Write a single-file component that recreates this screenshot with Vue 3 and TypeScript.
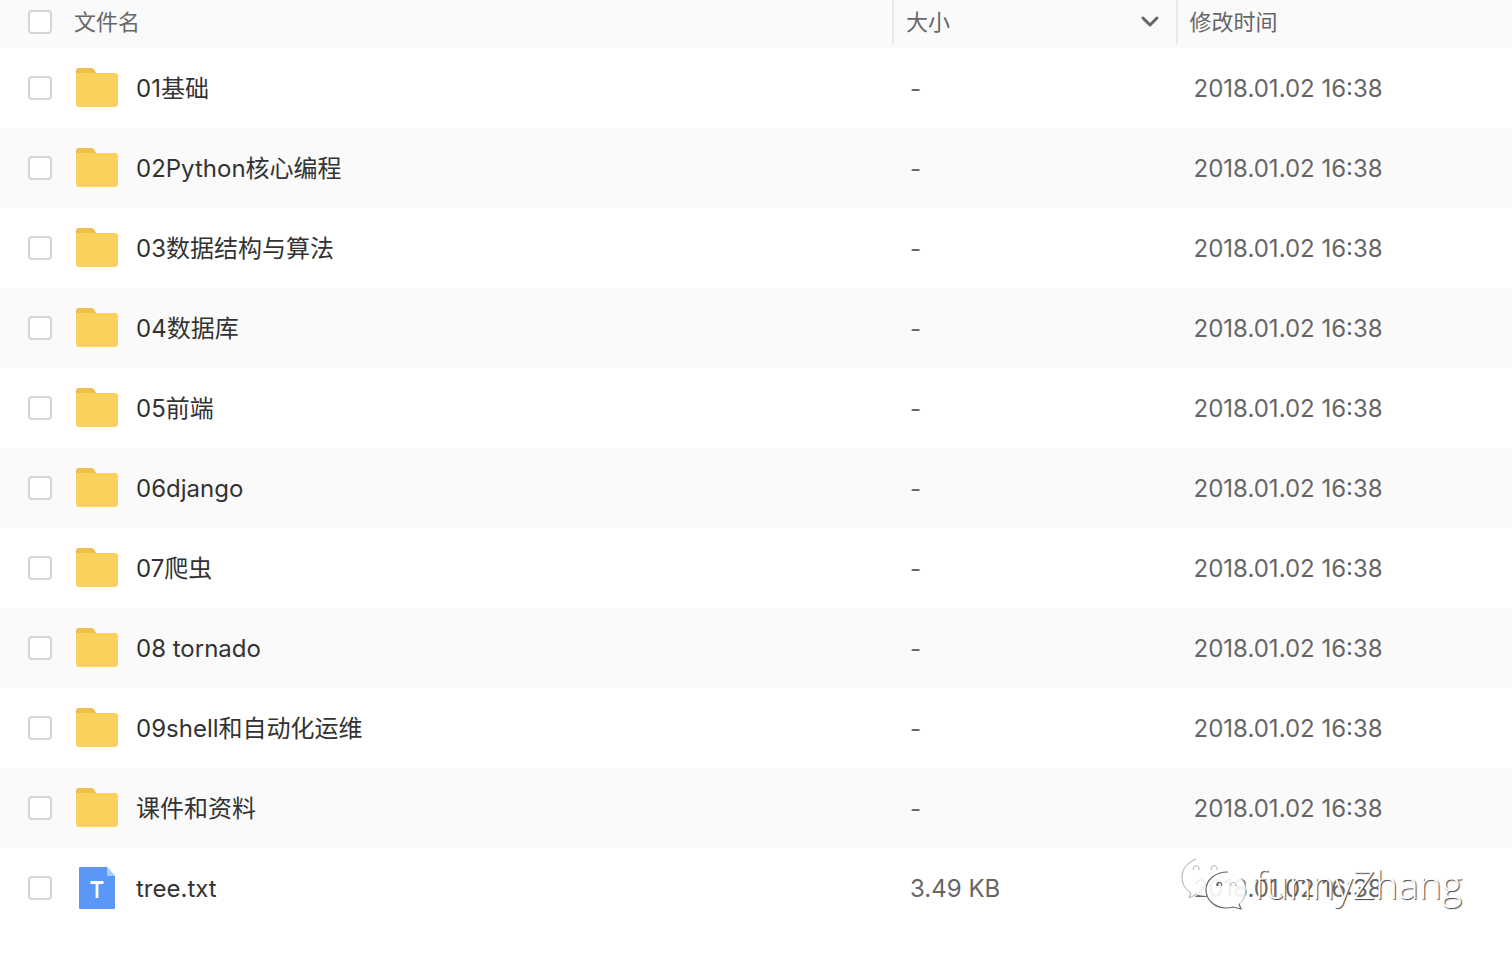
<script setup lang="ts">
import { ref } from 'vue'

interface FileEntry {
  name: string
  kind: 'folder' | 'text'
  size: string
  modified: string
}

const modified = '2018.01.02 16:38'

const folders = [
  '01基础',
  '02Python核心编程',
  '03数据结构与算法',
  '04数据库',
  '05前端',
  '06django',
  '07爬虫',
  '08 tornado',
  '09shell和自动化运维',
  '课件和资料',
]

const entries: FileEntry[] = [
  ...folders.map((name): FileEntry => ({ name, kind: 'folder', size: '-', modified })),
  { name: 'tree.txt', kind: 'text', size: '3.49 KB', modified },
]

const selected = ref<string[]>([])

function toggleAll(event: Event) {
  const checked = (event.target as HTMLInputElement).checked
  selected.value = checked ? entries.map((entry) => entry.name) : []
}
</script>

<template>
  <main class="browser">
    <table class="files">
      <colgroup>
        <col class="col-name" />
        <col class="col-size" />
        <col class="col-date" />
      </colgroup>
      <thead>
        <tr>
          <th scope="col">
            <div class="head name-cell">
              <input
                type="checkbox"
                class="check"
                aria-label="全选"
                :checked="selected.length === entries.length"
                @change="toggleAll"
              />
              <span>文件名</span>
            </div>
          </th>
          <th scope="col">
            <button type="button" class="head divided sort">
              <span>大小</span>
              <svg class="chevron" viewBox="0 0 20 14" aria-hidden="true">
                <path d="M3 3l7 7 7-7" />
              </svg>
            </button>
          </th>
          <th scope="col">
            <div class="head divided">修改时间</div>
          </th>
        </tr>
      </thead>
      <tbody>
        <tr v-for="(entry, index) in entries" :key="entry.name">
          <td>
            <div class="name-cell">
              <input :id="`file-${index}`" v-model="selected" type="checkbox" class="check" :value="entry.name" />
              <label class="file" :for="`file-${index}`">
                <svg v-if="entry.kind === 'folder'" class="icon" viewBox="0 0 42 42" aria-hidden="true">
                  <path d="M0 10V4q0-3 3-3h12q3 0 5 5v4z" fill="#ecc245" />
                  <path d="M0 6h39q3 0 3 3v28q0 3-3 3H3q-3 0-3-3z" fill="#f9d15c" />
                </svg>
                <svg v-else class="icon" viewBox="0 0 42 42" aria-hidden="true">
                  <path d="M4 0h27l8 9v32q0 1-1 1H4q-1 0-1-1V1q0-1 1-1z" fill="#5b97f7" />
                  <path d="M31 0l8 9h-7q-1 0-1-1z" fill="#a9cdfb" />
                  <path d="M14.500 15.500h13M21 15v16" fill="none" stroke="#fff" stroke-width="2.800" />
                </svg>
                <span class="file-name">{{ entry.name }}</span>
              </label>
            </div>
          </td>
          <td class="meta">{{ entry.size }}</td>
          <td class="meta">{{ entry.modified }}</td>
        </tr>
      </tbody>
    </table>

    <div class="watermark">
      <svg class="bubbles" viewBox="0 0 66 56" aria-hidden="true">
        <path
          class="bubble"
          d="M25 0C11 0 0 9 0 21c0 7 3 12 9 16l-2 6 9-4q5 1 9 1C25 28 32 18 47 16 45 7 36 0 25 0z"
        />
        <path class="edge faint" d="M14 3C5 7 0 13 0 21c0 7 3 12 9 16l-2 5 8-4" />
        <path
          class="bubble"
          d="M44 16C33 16 24 24 24 34s9 18 20 18q4 0 7-1l8 3-2-6c4-3 7-8 7-14 0-10-9-18-20-18z"
        />
        <path class="edge" d="M46 16C33 16 24 24 24 34s9 18 20 18q4 0 7-1l8 2-2-5" />
        <path class="edge faint" d="M57 48c4-3 7-8 7-14 0-5-2-9-5-12" />
        <path class="edge faint" d="M11.500 14a3 3 0 1 1 5.500 0M29.500 14a3 3 0 1 1 5.500 0M49 30a2.500 2.500 0 1 1 4.500 0" />
        <path class="edge" d="M35 30a2.500 2.500 0 1 1 4.500 0M36 27v3" />
      </svg>
      <span>funnyZhang</span>
    </div>
  </main>
</template>

<style>
body {
  margin: 0;
  background: #fff;
}
</style>

<style scoped>
.browser {
  position: relative;
  font-family: Inter, 'Noto Sans CJK SC', sans-serif;
  font-size: 24px;
  line-height: 30px;
  color: #333;
}

.files {
  width: 100%;
  table-layout: fixed;
  border-collapse: collapse;
}

.col-name {
  width: 59%;
}

.col-size {
  width: 18.75%;
}

th,
td {
  box-sizing: border-box;
  padding: 0;
  text-align: left;
  font-weight: 400;
}

th {
  height: 48px;
  vertical-align: top;
  background: #fafafa;
}

td {
  height: 80px;
}

tbody tr:nth-child(even) {
  background: #fafafa;
}

.head {
  display: flex;
  align-items: center;
  box-sizing: border-box;
  width: 100%;
  height: 44px;
  font-size: 22px;
  line-height: 30px;
  color: #666;
}

.divided {
  padding: 0 16px 0 12px;
  border-left: 2px solid #e8e8e8;
}

.sort {
  justify-content: space-between;
  border-width: 0 0 0 2px;
  background: none;
  font-family: inherit;
  cursor: pointer;
}

.chevron {
  width: 20px;
  height: 14px;
  fill: none;
  stroke: #666;
  stroke-width: 3;
  stroke-linecap: round;
  stroke-linejoin: round;
}

.name-cell {
  display: flex;
  align-items: center;
  gap: 24px;
  padding-left: 28px;
}

.name-cell.head {
  gap: 22px;
}

.check {
  appearance: none;
  flex: none;
  box-sizing: border-box;
  width: 24px;
  height: 24px;
  margin: 0;
  border: 2px solid #d6d6d6;
  border-radius: 4px;
  background: #fff;
}

.check:checked {
  background: #5b97f7;
  border-color: #5b97f7;
}

.file {
  display: flex;
  align-items: center;
  gap: 18px;
}

.file-name {
  padding-top: 2px;
}

.icon {
  flex: none;
  width: 42px;
  height: 42px;
}

.meta {
  padding: 2px 0 0 18px;
  color: #666;
}

.watermark {
  position: absolute;
  right: 50px;
  bottom: 16px;
  display: flex;
  align-items: center;
  gap: 6px;
  font-family: 'Open Sans', sans-serif;
  font-size: 39px;
  font-weight: 300;
  line-height: 56px;
  color: #fff;
  text-shadow: 1px 1px 1px #444;
  pointer-events: none;
}

.bubbles {
  width: 66px;
  height: 56px;
  overflow: visible;
}

.bubble {
  fill: #fff;
  fill-opacity: 0.9;
}

.edge {
  fill: none;
  stroke: #666;
  stroke-width: 1.2;
}

.edge.faint {
  stroke: #aaa;
  stroke-width: 1;
}
</style>
